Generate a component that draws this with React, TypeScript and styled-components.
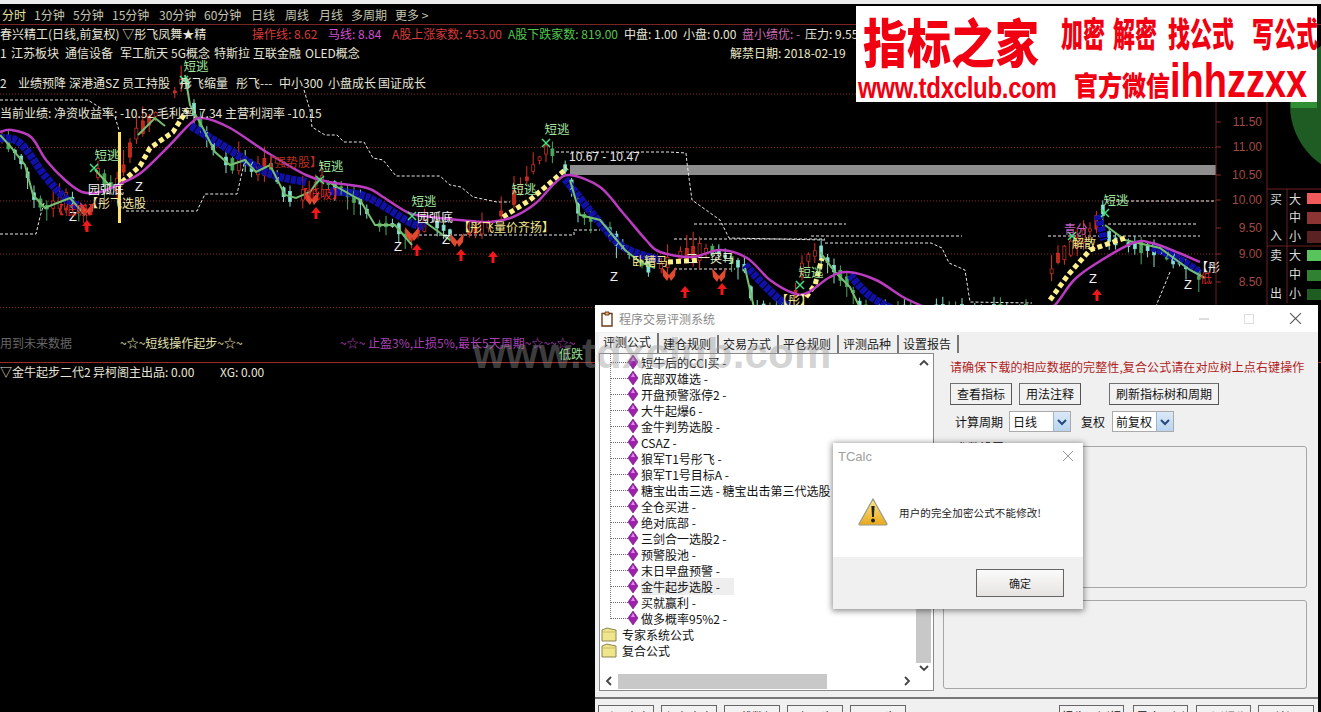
import React from "react";
import styled, { createGlobalStyle } from "styled-components";

const CJK = `"Noto Sans CJK SC", "Liberation Sans", sans-serif`;

const Global = createGlobalStyle`
  html, body { margin: 0; padding: 0; background: #000; }
  body { font-family: ${CJK}; font-size: 12px; }
`;

const Root = styled.div`
  position: relative;
  width: 1321px;
  height: 712px;
  overflow: hidden;
  background: #000;
  display: flex;
  flex-direction: column;
`;
const TopStrip = styled.div`height: 4px; background: #ececec;`;
const Toolbar = styled.div`
  height: 20px;
  display: flex;
  align-items: center;
  padding-left: 2px;
  border-bottom: 1px solid #7c2424;
  box-sizing: content-box;
`;
const ToolItem = styled.span<{ $w: number; $on?: boolean }>`
  width: ${(p) => p.$w}px;
  flex: none;
  color: ${(p) => (p.$on ? "#e8e0a0" : "#c4c4b0")};
  font-size: 12px;
  white-space: nowrap;
`;
const InfoRow = styled.div`
  height: 17px;
  display: flex;
  align-items: center;
  font-size: 12px;
  white-space: nowrap;
`;
const InfoCell = styled.span<{ $w: number; $c: string }>`
  width: ${(p) => p.$w}px;
  flex: none;
  color: ${(p) => p.$c};
`;
const MainPane = styled.div`
  position: relative;
  height: 320px;
  display: flex;
  flex-direction: column;
  padding-top: 2px;
  box-sizing: border-box;
`;
const ChartSvg = styled.svg`
  position: absolute;
  left: 0;
  top: 0;
  font-family: ${CJK};
`;
const TagRow = styled.div`
  position: relative;
  height: 16px;
  margin-bottom: 14px;
  display: flex;
  align-items: center;
  color: #e6e6d8;
  font-size: 12px;
  white-space: nowrap;
`;
const Tag = styled.span<{ $w: number; $c?: string }>`
  width: ${(p) => p.$w}px;
  flex: none;
  color: ${(p) => p.$c ?? "inherit"};
`;
const NoteRow = styled.div`
  position: relative;
  margin-top: auto;
  margin-bottom: 12px;
  height: 16px;
  display: flex;
  align-items: center;
  white-space: nowrap;
  font-size: 12px;
`;
const SubRow = styled.div`
  height: 17px;
  border-top: 1px solid #a02a2a;
  display: flex;
  align-items: center;
  color: #e6e6d8;
  white-space: nowrap;
  font-size: 12px;
`;

/* Banner */
const Banner = styled.div`
  position: absolute;
  left: 856px;
  top: 6px;
  width: 461px;
  height: 96px;
  background: #fff;
  color: #f00010;
  display: grid;
  grid-template-columns: 205px 1fr;
  font-weight: 900;
  overflow: hidden;
  z-index: 3;
`;
const BannerCol = styled.div`display: flex; flex-direction: column;`;
const BigTitle = styled.div`
  font-size: 44px;
  line-height: 68px;
  height: 64px;
  padding-left: 7px;
  white-space: nowrap;
  transform-origin: left 34px;
  transform: scaleY(1.2);
`;
const Site = styled.div`
  font-family: "Liberation Sans", sans-serif;
  font-weight: 700;
  font-size: 24px;
  line-height: 28px;
  margin-top: 4px;
  padding-left: 2px;
  white-space: nowrap;
  letter-spacing: -0.3px;
  transform-origin: left center;
  transform: scaleY(1.2);
`;
const Slogan = styled.div`
  display: flex;
  font-size: 22px;
  line-height: 50px;
  height: 50px;
  white-space: nowrap;
  font-weight: 900;
`;
const SloganWord = styled.span<{ $ml: number }>`
  display: inline-block;
  margin-left: ${(p) => p.$ml}px;
  transform: scaleY(1.55);
`;
const WechatRow = styled.div`
  display: flex;
  align-items: baseline;
  height: 46px;
  padding: 7px 0 0 13px;
  box-sizing: border-box;
  white-space: nowrap;
  line-height: 40px;
`;
const WechatCn = styled.span`
  display: inline-block;
  font-size: 24px;
  font-weight: 900;
  transform-origin: left 75%;
  transform: scaleY(1.15);
`;
const WechatId = styled.span`
  display: inline-block;
  font-family: "Liberation Sans", sans-serif;
  font-weight: 700;
  font-size: 38px;
  transform-origin: left 72%;
  transform: scaleY(1.25);
`;

/* Main window */
const Win = styled.div`
  position: absolute;
  left: 595px;
  top: 305px;
  width: 723px;
  height: 430px;
  background: #f0f0f0;
  z-index: 2;
  display: flex;
  flex-direction: column;
  color: #111;
`;
const TitleBar = styled.div`
  height: 27px;
  background: #fff;
  display: flex;
  align-items: center;
  padding-left: 5px;
  color: #8a8a8a;
  font-size: 12px;
`;
const TitleText = styled.span`margin-left: 5px; flex: 1;`;
const WinBtn = styled.span<{ $w: number }>`
  width: ${(p) => p.$w}px;
  display: flex;
  justify-content: center;
  flex: none;
`;
const Tabs = styled.div`
  height: 21px;
  display: flex;
  padding-left: 4px;
  align-items: flex-end;
`;
const TabItem = styled.div<{ $on?: boolean }>`
  width: 60px;
  height: ${(p) => (p.$on ? 20 : 18)}px;
  box-sizing: border-box;
  padding-left: 4px;
  line-height: 17px;
  font-size: 12px;
  white-space: nowrap;
  border-right: 2px solid #777;
  background: ${(p) => (p.$on ? "#f6f6f6" : "transparent")};
  color: #222;
`;
const Body = styled.div`
  display: flex;
  padding-left: 4px;
  height: 338px;
`;
const TreePanel = styled.div`
  width: 335px;
  flex: none;
  background: #fff;
  border: 1px solid #8a8a8a;
  box-sizing: border-box;
  display: grid;
  grid-template-columns: 1fr 15px;
  grid-template-rows: 1fr 16px;
  padding: 0 2px 1px 0;
`;
const TreeList = styled.div`
  position: relative;
  overflow: hidden;
  font-size: 12px;
  &::before {
    content: "";
    position: absolute;
    left: 10px;
    top: 0;
    height: 265px;
    border-left: 1px dotted #777;
  }
`;
const TreeRow = styled.div`
  height: 16px;
  display: flex;
  align-items: center;
  white-space: nowrap;
  color: #111;
`;
const Connector = styled.span`
  width: 17px;
  margin-left: 11px;
  border-top: 1px dotted #666;
  flex: none;
`;
const RowText = styled.span<{ $sel?: boolean }>`
  margin-left: 3px;
  padding-right: 12px;
  min-width: ${(p) => (p.$sel ? 81 : 0)}px;
  background: ${(p) => (p.$sel ? "#eeeeee" : "transparent")};
`;
const FolderText = styled.span`margin-left: 5px;`;
const VBar = styled.div`
  display: flex;
  flex-direction: column;
  align-items: center;
  padding-top: 4px;
  color: #444;
`;
const VThumb = styled.div`
  width: 15px;
  height: 176px;
  margin-top: auto;
  background: #c8c8c8;
`;
const HBar = styled.div`
  display: flex;
  align-items: center;
  padding-left: 4px;
  grid-column: 1 / 2;
`;
const HThumb = styled.div`
  width: 209px;
  height: 15px;
  margin-left: 4px;
  background: #c8c8c8;
`;
const HRest = styled.div`
  flex: 1;
  display: flex;
  justify-content: flex-end;
  padding-right: 4px;
`;
const RightPanel = styled.div`
  flex: 1;
  padding: 6px 11px 0 9px;
  display: flex;
  flex-direction: column;
`;
const RedNote = styled.div`
  color: #b01c1c;
  font-size: 12px;
  line-height: 16px;
  padding-left: 7px;
  white-space: nowrap;
  letter-spacing: 0.1px;
`;
const BtnRow = styled.div`
  margin-top: 8px;
  padding-left: 7px;
  display: flex;
  gap: 7px;
`;
const PlainBtn = styled.div<{ $w: number; $ml?: number }>`
  width: ${(p) => p.$w}px;
  height: 22px;
  margin-left: ${(p) => p.$ml ?? 0}px;
  box-sizing: border-box;
  border: 1px solid #707070;
  border-bottom-color: #555;
  border-right-color: #555;
  background: #f2f2f2;
  text-align: center;
  font-size: 12px;
  line-height: 20px;
  white-space: nowrap;
`;
const SelRow = styled.div`
  margin-top: 6px;
  padding-left: 12px;
  height: 21px;
  display: flex;
  align-items: center;
  font-size: 12px;
`;
const Sel = styled.div<{ $w: number; $ml: number; $mr: number }>`
  width: ${(p) => p.$w}px;
  margin-left: ${(p) => p.$ml}px;
  margin-right: ${(p) => p.$mr}px;
  height: 21px;
  box-sizing: border-box;
  background: #fff;
  border: 1px solid #aaa;
  display: flex;
  align-items: center;
  padding-left: 3px;
  justify-content: space-between;
`;
const SelArrow = styled.span`
  width: 16px;
  height: 19px;
  background: linear-gradient(#dbe9f8, #b9d3ef);
  border-left: 1px solid #9bb7d6;
  display: flex;
  align-items: center;
  justify-content: center;
`;
const Group = styled.div<{ $h: number; $mt: number }>`
  position: relative;
  height: ${(p) => p.$h}px;
  margin-top: ${(p) => p.$mt}px;
  box-sizing: border-box;
  border: 1px solid #a6a6a6;
  border-radius: 3px;
`;
const Legend = styled.span`
  position: absolute;
  left: 11px;
  top: -8px;
  padding: 0 1px;
  background: #f0f0f0;
  font-size: 12px;
`;
const Divider = styled.div`
  margin-top: 6px;
  height: 2px;
  background: #777;
`;
const FootRow = styled.div`
  display: flex;
  padding: 6px 4px 0 3px;
`;
const FootBtn = styled.div<{ $w: number; $ml: number; $dim?: boolean }>`
  width: ${(p) => p.$w}px;
  margin-left: ${(p) => p.$ml}px;
  height: 24px;
  box-sizing: border-box;
  border: 1px solid #666;
  background: #f2f2f2;
  text-align: center;
  line-height: 21px;
  font-size: 12px;
  color: ${(p) => (p.$dim ? "#999" : "#111")};
  white-space: nowrap;
`;

/* Watermark */
const Watermark = styled.div`
  position: absolute;
  left: 473px;
  top: 331px;
  font-family: "Liberation Sans", sans-serif;
  font-weight: 700;
  font-size: 42px;
  line-height: 46px;
  letter-spacing: 0.2px;
  color: rgba(150, 150, 150, 0.42);
  white-space: nowrap;
  z-index: 2;
`;

/* Dialog */
const Dialog = styled.div`
  position: absolute;
  left: 833px;
  top: 443px;
  width: 250px;
  height: 166px;
  z-index: 4;
  background: #f0f0f0;
  box-shadow: 0 1px 6px 1px rgba(0, 0, 0, 0.45);
  display: flex;
  flex-direction: column;
`;
const DialogMain = styled.div`
  height: 114px;
  background: #fff;
  display: flex;
  flex-direction: column;
`;
const DialogTitle = styled.div`
  height: 26px;
  display: flex;
  align-items: center;
  justify-content: space-between;
  padding: 0 9px 0 5px;
  color: #a0a0a0;
  font-family: "Liberation Sans", sans-serif;
  font-size: 13px;
`;
const DialogMsg = styled.div`
  display: flex;
  align-items: center;
  padding: 29px 0 0 25px;
  gap: 11px;
  font-size: 10.5px;
  letter-spacing: 0.15px;
  color: #222;
  white-space: nowrap;
`;
const DialogFoot = styled.div`
  flex: 1;
  display: flex;
  justify-content: flex-end;
  align-items: flex-start;
  padding: 12px 19px 0 0;
`;
const OkBtn = styled.div`
  width: 88px;
  height: 28px;
  box-sizing: border-box;
  border: 1px solid #666;
  background: linear-gradient(#fbfbfb, #e6e4e2);
  text-align: center;
  line-height: 26px;
  font-size: 11px;
  color: #222;
`;

/* ---------- chart data ---------- */
type P = [number, number];
const smooth = (pts: P[]) => {
  let d = `M${pts[0][0]} ${pts[0][1]}`;
  for (let i = 0; i < pts.length - 1; i++) {
    const p0 = pts[Math.max(i - 1, 0)], p1 = pts[i], p2 = pts[i + 1], p3 = pts[Math.min(i + 2, pts.length - 1)];
    const c1x = p1[0] + (p2[0] - p0[0]) / 6, c1y = p1[1] + (p2[1] - p0[1]) / 6;
    const c2x = p2[0] - (p3[0] - p1[0]) / 6, c2y = p2[1] - (p3[1] - p1[1]) / 6;
    d += ` C${c1x.toFixed(1)} ${c1y.toFixed(1)} ${c2x.toFixed(1)} ${c2y.toFixed(1)} ${p2[0]} ${p2[1]}`;
  }
  return d;
};
const line = (pts: P[]) => "M" + pts.map((p) => p.join(" ")).join(" L");

const MAG1: P[] = [[0,132],[11,130],[31,137],[46,160],[65,180],[82,192],[100,192],[122,183],[142,172],[168,147],[191,123],[203,118],[230,128],[268,153],[306,175],[329,182],[367,188],[383,197],[409,213],[432,217],[459,220],[490,222],[513,217],[536,203],[555,183],[570,175],[600,187],[623,213],[646,240],[660,252],[692,257],[720,250],[747,258],[770,280],[793,293],[807,293],[830,277],[848,272],[876,280],[903,297],[922,306]];
const MAG2: P[] = [[1040,312],[1055,305],[1074,280],[1097,263],[1133,243],[1152,243],[1179,253],[1200,262]];
const BLUE: P[][] = [
  [[0,138],[20,143],[45,176],[65,198],[82,208]],
  [[191,126],[225,147],[268,173],[306,182]],
  [[330,191],[367,197],[409,222],[425,227]],
  [[565,179],[600,223],[625,248],[660,260]],
  [[745,265],[770,291],[795,313]],
  [[850,275],[870,296],[900,313]],
  [[1098,215],[1104,240]],
  [[1152,247],[1179,259],[1200,273]],
];
const GREEN: P[][] = [
  [[0,135],[10,146],[25,165],[33,195],[45,208],[52,205],[70,198],[85,215]],
  [[95,170],[112,188]],
  [[138,135],[155,118],[165,126]],
  [[185,75],[190,105],[204,130],[215,152],[230,165],[245,160],[256,172],[270,165],[285,195],[296,198],[310,192],[320,178]],
  [[330,183],[360,200],[375,225],[395,225],[412,245]],
  [[425,222],[450,240]],
  [[570,180],[580,215],[600,220],[625,250],[640,262],[655,268]],
  [[745,268],[755,312]],
  [[820,252],[835,272],[850,287],[862,312]],
  [[1105,225],[1125,240],[1160,248],[1190,270],[1205,278]],
];
const PRICE: P[] = [[0,135],[10,145],[25,165],[33,195],[45,208],[52,205],[70,200],[85,215],[92,180],[97,172],[115,190],[125,165],[135,135],[148,122],[165,105],[180,85],[185,72],[192,105],[204,130],[215,150],[230,165],[245,160],[255,170],[270,165],[285,195],[295,198],[310,192],[320,178],[340,190],[360,200],[375,225],[395,225],[410,240],[425,225],[440,225],[457,238],[490,225],[500,215],[520,190],[535,165],[546,150],[560,155],[570,180],[580,215],[600,220],[625,250],[640,262],[655,270],[680,255],[715,250],[745,268],[755,310],[790,310],[805,260],[820,250],[835,270],[850,285],[862,310],[1040,310],[1055,260],[1075,245],[1095,225],[1103,210],[1110,240],[1130,245],[1160,250],[1190,270],[1205,278]];

const interp = (x: number) => {
  for (let i = 0; i < PRICE.length - 1; i++) {
    const a = PRICE[i], b = PRICE[i + 1];
    if (x >= a[0] && x <= b[0]) return a[1] + ((b[1] - a[1]) * (x - a[0])) / (b[0] - a[0]);
  }
  return 278;
};
const rnd = (n: number) => { const s = Math.sin(n * 12.9898) * 43758.5453; return s - Math.floor(s); };

const candles = (() => {
  const out: { x: number; top: number; h: number; wt: number; wb: number; c: string; fill: string }[] = [];
  for (let i = 0, x = 2; x < 1205; i++, x += 6.4) {
    if (rnd(i + 900) < 0.18) continue;
    const y = interp(x);
    const up = interp(x + 6) < interp(x - 6);
    const h = 2 + rnd(i) * (up ? 16 : 10);
    const wt = 1 + rnd(i + 100) * (up ? 14 : 7);
    const wb = 1 + rnd(i + 200) * (up ? 8 : 12);
    const c = up ? "#d83428" : rnd(i + 300) > 0.45 ? "#84e2d0" : "#4aa85c";
    out.push({ x, top: y - h / 2, h, wt, wb, c, fill: up ? (rnd(i + 5) > 0.4 ? "#000" : "#c02818") : c });
  }
  return out;
})();

const DASH: P[][] = [
  [[0,234],[36,234],[40,217],[44,203]],
  [[126,211],[197,211],[205,194],[237,194],[245,160]],
  [[0,100],[88,100],[99,107],[115,117],[119,130]],
  [[304,90],[310,110],[312,127],[325,135],[337,135],[344,142],[364,142],[373,158],[383,160],[396,176],[440,176],[450,185],[461,187],[473,197],[497,202],[510,202]],
  [[419,235],[574,235],[574,230],[600,230]],
  [[551,152],[669,152],[686,153],[687,163],[692,200],[706,210],[720,220],[729,238],[825,240]],
  [[694,224],[846,224]],
  [[674,239],[825,239]],
  [[811,236],[962,236]],
  [[825,243],[931,243],[942,248],[949,263],[965,270],[970,302],[1032,303]],
  [[1048,236],[1200,236]],
  [[1108,224],[1198,224]],
  [[1106,201],[1216,201]],
  [[674,269],[735,269]],
  [[1170,272],[1156,306]],
];
const YELLOW: P[][] = [
  [[122,182],[140,166],[150,148],[173,132],[187,110]],
  [[503,217],[530,200],[550,183],[567,168]],
  [[806,297],[815,285],[822,258]],
  [[1050,300],[1068,275],[1090,250],[1125,238]],
  [[668,262],[700,260]],
];
const SHORT: P[] = [[107,155],[196,66],[331,166],[424,201],[524,189],[557,129],[811,272],[1116,200]];
const ZS: P[] = [[73,221],[139,191],[398,251],[446,244],[614,281],[1093,283],[1188,289]];
const ARROWS: P[] = [[87,226],[316,213],[417,250],[461,255],[493,257],[685,292],[722,289],[1097,295]];
const FLIES: P[] = [[312,197],[412,233],[457,239],[669,273],[719,274],[87,208]];
const XS: P[] = [[184,80],[320,180],[412,216],[546,143],[94,168],[1105,213],[800,285],[1072,236]];
const GRID = [94, 147.5, 201, 254, 307.5];
const AXIS: [string, number][] = [["11.50",122],["11.00",147],["10.50",175],["10.00",200],["9.50",228],["9.00",254],["8.50",282]];
const SWATCH: [number, number, string][] = [[193,11,"#f05a5a"],[212,12,"#8c3434"],[231,12,"#5a2222"],[250,11,"#58c45c"],[270,11,"#308232"],[289,11,"#1f5c22"]];
const SIDE: [string, number, number][] = [["买",1276,204],["入",1276,240],["大",1295,204],["中",1295,222],["小",1295,241],["卖",1276,260],["出",1276,298],["大",1295,260],["中",1295,279],["小",1295,298]];

const Chart = () => (
  <ChartSvg width={1321} height={320} viewBox="0 42 1321 320">
    <defs>
      <clipPath id="pie"><rect x="1268" y="42" width="53" height="146" /></clipPath>
    </defs>
    {GRID.map((y) => (
      <line key={y} x1={0} x2={1216} y1={y} y2={y} stroke="#8a2a2a" strokeDasharray="1 2" />
    ))}
    <rect x={570} y={165} width={646} height={10} fill="#8e8e8e" />
    {DASH.map((d, i) => (
      <path key={i} d={line(d)} fill="none" stroke="#e8e8e8" strokeWidth={1} strokeDasharray="3 2" />
    ))}
    {candles.map((c, i) => (
      <g key={i}>
        <line x1={c.x} x2={c.x} y1={c.top - c.wt} y2={c.top + c.h + c.wb} stroke={c.c} />
        <rect x={c.x - 1.5} y={c.top} width={3} height={c.h} fill={c.fill} stroke={c.c} strokeWidth={0.7} />
      </g>
    ))}
    <rect x={118} y={132} width={3} height={91} fill="#ffe26a" />
    {BLUE.map((d, i) => (
      <path key={i} d={smooth(d)} fill="none" stroke="#1010a8" strokeWidth={8} strokeDasharray="5 1" />
    ))}
    {GREEN.map((d, i) => (
      <path key={i} d={line(d)} fill="none" stroke="#74c070" strokeWidth={2} />
    ))}
    {YELLOW.map((d, i) => (
      <path key={i} d={line(d)} fill="none" stroke="#fff08a" strokeWidth={5} strokeDasharray="5 3" />
    ))}
    <path d={smooth(MAG1)} fill="none" stroke="#bb3cc0" strokeWidth={2.5} />
    <path d={smooth(MAG2)} fill="none" stroke="#bb3cc0" strokeWidth={2.5} />
    {FLIES.map(([x, y], i) => (
      <path key={i} fill="#e04a30" d={`M${x} ${y + 2} L${x - 7} ${y - 6} L${x - 6} ${y + 3} L${x - 2} ${y + 8} L${x} ${y + 4} L${x + 2} ${y + 8} L${x + 6} ${y + 3} L${x + 7} ${y - 6} Z`} />
    ))}
    {ARROWS.map(([x, y], i) => (
      <path key={i} fill="#f01818" d={`M${x} ${y - 6} L${x + 5} ${y} L${x + 1.5} ${y} L${x + 1.5} ${y + 6} L${x - 1.5} ${y + 6} L${x - 1.5} ${y} L${x - 5} ${y} Z`} />
    ))}
    {XS.map(([x, y], i) => (
      <path key={i} d={`M${x - 4} ${y - 4} L${x + 4} ${y + 4} M${x + 4} ${y - 4} L${x - 4} ${y + 4}`} stroke="#46e07c" strokeWidth={1.5} />
    ))}
    <g fontSize={12.5} fill="#a2e8a2" textAnchor="middle">
      {SHORT.map(([x, y], i) => (
        <text key={i} x={x} y={y + 5}>短逃</text>
      ))}
    </g>
    <g fontSize={13} fill="#f0f0f0" textAnchor="middle" fontFamily="Liberation Sans, sans-serif">
      {ZS.map(([x, y], i) => (
        <text key={i} x={x} y={y}>Z</text>
      ))}
    </g>
    <g fontSize={12}>
      <text x={88} y={194} fill="#f4f4f4">园弧底</text>
      <text x={86} y={208} fill="#f0e8b0">【彤飞选股</text>
      <text x={52} y={215} fill="#d82828">【低吸】</text>
      <text x={262} y={167} fill="#b83020">【强势股】</text>
      <text x={296} y={199} fill="#e02a28">【低吸】</text>
      <text x={417} y={222} fill="#f4f4f4">园弧底</text>
      <text x={458} y={232} fill="#f4e890">【彤飞量价齐扬】</text>
      <text x={632} y={266} fill="#f4e890">卧糟马</text>
      <text x={686} y={263} fill="#f0f0d0">二一突马</text>
      <text x={776} y={305} fill="#f4e890">【彤】</text>
      <text x={1064} y={234} fill="#c060c0">青分</text>
      <text x={1072} y={248} fill="#f4e890">解散</text>
      <text x={1196} y={272} fill="#f4f4f4">【彤</text>
      <text x={1200} y={283} fill="#d82828">低</text>
      <text x={559} y={359} fill="#9ce09c">低跌</text>
      <text x={569} y={161} fill="#e8e8e8" fontFamily="Liberation Sans, sans-serif">10.67 - 10.47</text>
    </g>
    <line x1={1216} x2={1216} y1={42} y2={306} stroke="#6c2020" />
    <line x1={1267} x2={1267} y1={42} y2={306} stroke="#6c2020" />
    {AXIS.map(([t, y]) => (
      <g key={t}>
        <line x1={1216} x2={1221} y1={y} y2={y} stroke="#8a2a2a" />
        <text x={1262} y={y + 4} textAnchor="end" fontSize={12} fill="#a04a44" fontFamily="Liberation Sans, sans-serif">{t}</text>
      </g>
    ))}
    <line x1={1267} x2={1321} y1={189} y2={189} stroke="#6c2020" />
    <line x1={1267} x2={1321} y1={246} y2={246} stroke="#6c2020" />
    <line x1={1287} x2={1287} y1={189} y2={303} stroke="#6c2020" />
    {SWATCH.map(([y, h, c]) => (
      <rect key={y} x={1307} y={y} width={14} height={h} fill={c} />
    ))}
    <g fontSize={12} fill="#dcdcdc" textAnchor="middle">
      {SIDE.map(([t, x, y], i) => (
        <text key={i} x={x} y={y}>{t}</text>
      ))}
    </g>
    <g clipPath="url(#pie)">
      <circle cx={1362} cy={105} r={72} fill="#1e5c24" />
      <rect x={1291} y={96} width={26} height={12} fill="#2f8f34" />
    </g>
  </ChartSvg>
);

const TREE = ["短牛后的CCI买 -","底部双雄选 -","开盘预警涨停2 -","大牛起爆6 -","金牛判势选股 -","CSAZ -","狼军T1号彤飞 -","狼军T1号目标A -","糖宝出击三选 - 糖宝出击第三代选股","全仓买进 -","绝对底部 -","三剑合一选股2 -","预警股池 -","末日早盘预警 -","金牛起步选股 -","买就赢利 -","做多概率95%2 -"];

const Diamond = () => (
  <svg width="10" height="14" viewBox="0 0 10 14" style={{ flex: "none" }}>
    <path d="M5 0 L10 7 L5 14 L0 7 Z" fill="#a020b0" stroke="#5a1068" strokeWidth="0.6" />
    <path d="M5 2 L7 6 L3 6 Z" fill="#e088e8" />
  </svg>
);
const Folder = () => (
  <svg width="16" height="15" viewBox="0 0 16 15" style={{ flex: "none", marginLeft: 1 }}>
    <path d="M1 3 L6 1 L10 2 L15 3 L15 14 L1 14 Z" fill="#efe58c" stroke="#8a8350" />
    <path d="M1 5 L15 5" stroke="#c9bd66" />
  </svg>
);
const Chev = ({ d }: { d: "u" | "d" | "l" | "r" }) => {
  const paths = { u: "M1 7 L5 3 L9 7", d: "M1 3 L5 7 L9 3", l: "M7 1 L3 5 L7 9", r: "M3 1 L7 5 L3 9" };
  return (
    <svg width="10" height="10" viewBox="0 0 10 10">
      <path d={paths[d]} fill="none" stroke="#444" strokeWidth="1.8" />
    </svg>
  );
};
const SelChev = () => (
  <svg width="10" height="10" viewBox="0 0 10 10">
    <path d="M1 3 L5 7 L9 3" fill="none" stroke="#234a7c" strokeWidth="2" />
  </svg>
);
const WarnIcon = () => (
  <svg width="30" height="28" viewBox="0 0 30 28" style={{ flex: "none" }}>
    <defs>
      <linearGradient id="warn" x1="0" y1="0" x2="0" y2="1">
        <stop offset="0" stopColor="#fbe98a" />
        <stop offset="1" stopColor="#e8a81c" />
      </linearGradient>
    </defs>
    <path d="M15 1 L29 26 Q29 27 28 27 L2 27 Q1 27 1 26 Z" fill="url(#warn)" stroke="#9a9a8a" strokeWidth="1.2" />
    <path d="M13.4 8 L16.6 8 L15.9 19 L14.1 19 Z" fill="#222" />
    <circle cx="15" cy="22.5" r="1.9" fill="#222" />
  </svg>
);
const ClipIcon = () => (
  <svg width="14" height="16" viewBox="0 0 14 16">
    <path d="M2 2.5 L12 2.5 L12 15 L2 15 Z" fill="#fff" stroke="#6b3a1a" strokeWidth="1.4" />
    <path d="M5 1 L9 1 L9 4 L5 4 Z" fill="#e8b070" stroke="#6b3a1a" />
  </svg>
);
const CloseX = ({ c, s }: { c: string; s: number }) => (
  <svg width={s} height={s} viewBox="0 0 12 12">
    <path d="M1 1 L11 11 M11 1 L1 11" stroke={c} strokeWidth="1" />
  </svg>
);

export default function App() {
  return (
    <Root>
      <Global />
      <TopStrip />
      <Toolbar>
        <ToolItem $w={32} $on>分时</ToolItem>
        <ToolItem $w={39}>1分钟</ToolItem>
        <ToolItem $w={39}>5分钟</ToolItem>
        <ToolItem $w={47}>15分钟</ToolItem>
        <ToolItem $w={45}>30分钟</ToolItem>
        <ToolItem $w={47}>60分钟</ToolItem>
        <ToolItem $w={34}>日线</ToolItem>
        <ToolItem $w={34}>周线</ToolItem>
        <ToolItem $w={32}>月线</ToolItem>
        <ToolItem $w={44}>多周期</ToolItem>
        <ToolItem $w={40}>更多 &gt;</ToolItem>
      </Toolbar>
      <InfoRow>
        <InfoCell $w={252} $c="#e6e6d8">春兴精工(日线,前复权) ▽彤飞凤舞★精</InfoCell>
        <InfoCell $w={76} $c="#d83a3a">操作线: 8.62</InfoCell>
        <InfoCell $w={64} $c="#d050d0">马线: 8.84</InfoCell>
        <InfoCell $w={116} $c="#d83a3a">A股上涨家数: 453.00</InfoCell>
        <InfoCell $w={116} $c="#50c850">A股下跌家数: 819.00</InfoCell>
        <InfoCell $w={59} $c="#e6e6d8">中盘: 1.00</InfoCell>
        <InfoCell $w={59} $c="#e6e6d8">小盘: 0.00</InfoCell>
        <InfoCell $w={63} $c="#c86ab0">盘小绩优: -</InfoCell>
        <InfoCell $w={60} $c="#e6e6d8">压力: 9.55</InfoCell>
      </InfoRow>
      <MainPane>
        <Chart />
        <TagRow>
          <Tag $w={11}>1</Tag>
          <Tag $w={54}>江苏板块</Tag>
          <Tag $w={55}>通信设备</Tag>
          <Tag $w={51}>军工航天</Tag>
          <Tag $w={43}>5G概念</Tag>
          <Tag $w={39}>特斯拉</Tag>
          <Tag $w={52}>互联金融</Tag>
          <Tag $w={425}>OLED概念</Tag>
          <Tag $w={120} $c="#e8e8c8">解禁日期: 2018-02-19</Tag>
        </TagRow>
        <TagRow>
          <Tag $w={18}>2</Tag>
          <Tag $w={51}>业绩预降</Tag>
          <Tag $w={53}>深港通SZ</Tag>
          <Tag $w={58}>员工持股</Tag>
          <Tag $w={56}>彤飞缩量</Tag>
          <Tag $w={43}>彤飞---</Tag>
          <Tag $w={49}>中小300</Tag>
          <Tag $w={50}>小盘成长</Tag>
          <Tag $w={50}>国证成长</Tag>
        </TagRow>
        <TagRow>当前业绩: 净资收益率: -10.52 毛利率: 7.34 主营利润率 -10.15</TagRow>
        <NoteRow>
          <Tag $w={120} $c="#666">用到未来数据</Tag>
          <Tag $w={220} $c="#e0e0b0">~☆~短线操作起步~☆~</Tag>
          <Tag $w={260} $c="#a842b4">~☆~ 止盈3%,止损5%,最长5天周期~☆~~☆~</Tag>
        </NoteRow>
      </MainPane>
      <SubRow>
        <Tag $w={93}>▽金牛起步二代2</Tag>
        <Tag $w={127}>异柯阁主出品: 0.00</Tag>
        <Tag $w={80}>XG: 0.00</Tag>
      </SubRow>

      <Banner>
        <BannerCol>
          <BigTitle>指标之家</BigTitle>
          <Site>www.tdxclub.com</Site>
        </BannerCol>
        <BannerCol>
          <Slogan>
            <SloganWord $ml={0}>加密</SloganWord>
            <SloganWord $ml={8}>解密</SloganWord>
            <SloganWord $ml={11}>找公式</SloganWord>
            <SloganWord $ml={18}>写公式</SloganWord>
          </Slogan>
          <WechatRow>
            <WechatCn>官方微信</WechatCn>
            <WechatId>ihhzzxx</WechatId>
          </WechatRow>
        </BannerCol>
      </Banner>

      <Win>
        <TitleBar>
          <ClipIcon />
          <TitleText>程序交易评测系统</TitleText>
          <WinBtn $w={45}><svg width="12" height="12"><path d="M1 6 H11" stroke="#bbb" /></svg></WinBtn>
          <WinBtn $w={46}><svg width="12" height="12"><rect x="1.5" y="1.5" width="9" height="9" fill="none" stroke="#ddd" /></svg></WinBtn>
          <WinBtn $w={46}><CloseX c="#555" s={13} /></WinBtn>
        </TitleBar>
        <Tabs>
          <TabItem $on>评测公式</TabItem>
          <TabItem>建仓规则</TabItem>
          <TabItem>交易方式</TabItem>
          <TabItem>平仓规则</TabItem>
          <TabItem>评测品种</TabItem>
          <TabItem>设置报告</TabItem>
        </Tabs>
        <Body>
          <TreePanel>
            <TreeList>
              {TREE.map((t, i) => (
                <TreeRow key={t}>
                  <Connector />
                  <Diamond />
                  <RowText $sel={i === 14}>{t}</RowText>
                </TreeRow>
              ))}
              <TreeRow><Folder /><FolderText>专家系统公式</FolderText></TreeRow>
              <TreeRow><Folder /><FolderText>复合公式</FolderText></TreeRow>
            </TreeList>
            <VBar>
              <Chev d="u" />
              <VThumb />
              <Chev d="d" />
            </VBar>
            <HBar>
              <Chev d="l" />
              <HThumb />
              <HRest><Chev d="r" /></HRest>
            </HBar>
          </TreePanel>
          <RightPanel>
            <RedNote>请确保下载的相应数据的完整性,复合公式请在对应树上点右键操作</RedNote>
            <BtnRow>
              <PlainBtn $w={62}>查看指标</PlainBtn>
              <PlainBtn $w={62}>用法注释</PlainBtn>
              <PlainBtn $w={110} $ml={21}>刷新指标树和周期</PlainBtn>
            </BtnRow>
            <SelRow>
              <span>计算周期</span>
              <Sel $w={62} $ml={6} $mr={10}>日线<SelArrow><SelChev /></SelArrow></Sel>
              <span>复权</span>
              <Sel $w={62} $ml={7} $mr={0}>前复权<SelArrow><SelChev /></SelArrow></Sel>
            </SelRow>
            <Group $h={142} $mt={14}>
              <Legend>参数设置</Legend>
            </Group>
            <Group $h={89} $mt={12} />
          </RightPanel>
        </Body>
        <Divider />
        <FootRow>
          <FootBtn $w={56} $ml={0}>引入方案</FootBtn>
          <FootBtn $w={56} $ml={7}>保存方案</FootBtn>
          <FootBtn $w={56} $ml={7}>下载数据</FootBtn>
          <FootBtn $w={56} $ml={7}>上一步</FootBtn>
          <FootBtn $w={56} $ml={7}>下一步</FootBtn>
          <FootBtn $w={65} $ml={153}>报告评测报</FootBtn>
          <FootBtn $w={55} $ml={9}>导出评测</FootBtn>
          <FootBtn $w={55} $ml={8} $dim>评测报告</FootBtn>
          <FootBtn $w={56} $ml={7}>关闭</FootBtn>
        </FootRow>
      </Win>

      <Watermark>www.tdxclub.com</Watermark>

      <Dialog>
        <DialogMain>
          <DialogTitle>
            <span>TCalc</span>
            <CloseX c="#999" s={12} />
          </DialogTitle>
          <DialogMsg>
            <WarnIcon />
            <span>用户的完全加密公式不能修改!</span>
          </DialogMsg>
        </DialogMain>
        <DialogFoot>
          <OkBtn>确定</OkBtn>
        </DialogFoot>
      </Dialog>
    </Root>
  );
}
